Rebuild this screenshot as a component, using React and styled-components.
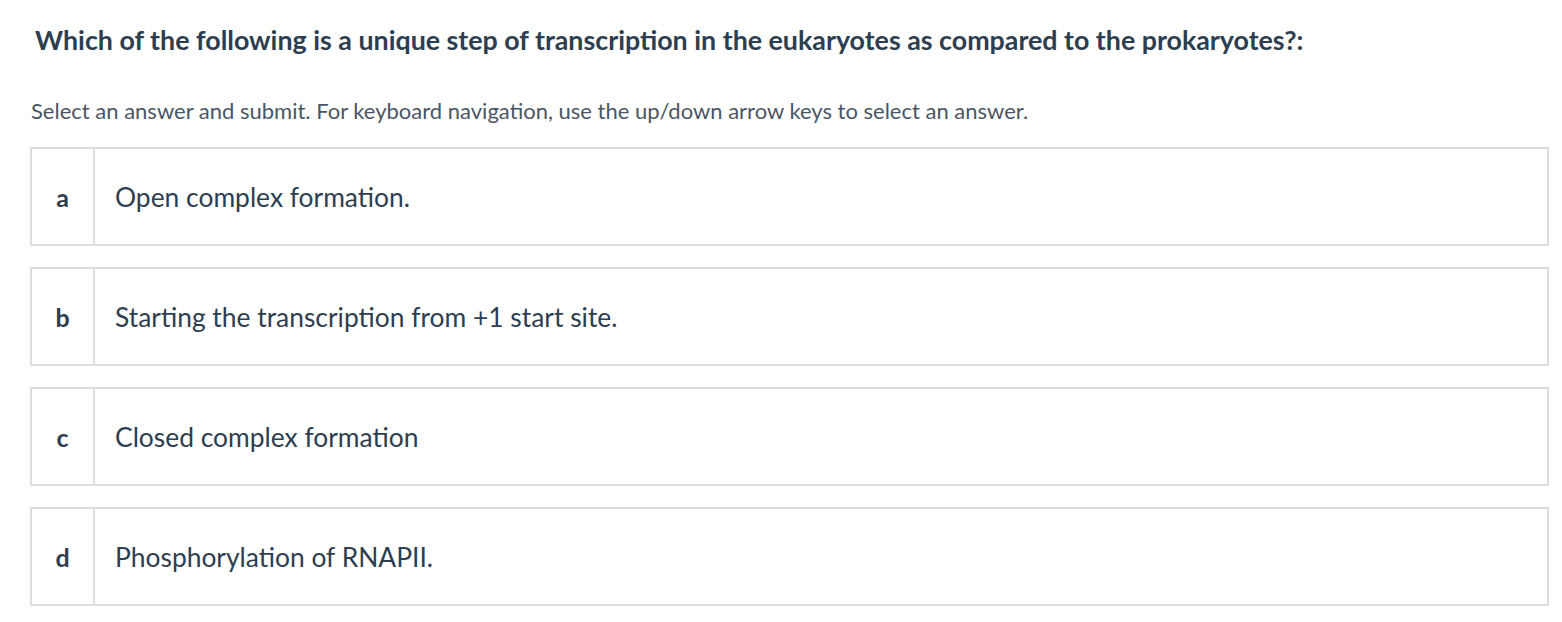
import React from "react";
import styled, { createGlobalStyle } from "styled-components";

const GlobalStyle = createGlobalStyle`
  body {
    margin: 0;
    background: #ffffff;
    font-family: Lato, "Open Sans", sans-serif;
    color: #2d3e50;
  }
`;

const Page = styled.div`
  padding: 22px 13px 0 30px;
`;

const Question = styled.h2`
  margin: 0 0 0 5px;
  font-size: 26.8px;
  line-height: 36px;
  font-weight: 700;
  color: #2d3e50;
`;

const Hint = styled.p`
  margin: 39px 0 22px 1px;
  font-size: 22px;
  line-height: 28px;
  color: #4a5663;
`;

const Options = styled.div`
  display: flex;
  flex-direction: column;
  gap: 21px;
`;

const Option = styled.div`
  display: flex;
  height: 99px;
  border: 2px solid #dadde1;
  box-sizing: border-box;
  background: #fff;
  cursor: pointer;
`;

const Letter = styled.div`
  width: 61px;
  flex-shrink: 0;
  display: flex;
  align-items: center;
  justify-content: center;
  border-right: 2px solid #dadde1;
  font-size: 25px;
  font-weight: 700;
  color: #2d3e50;
`;

const Label = styled.div`
  display: flex;
  align-items: center;
  padding-left: 20px;
  font-size: 26.4px;
  color: #2d3e50;
`;

const answers = [
  ["a", "Open complex formation."],
  ["b", "Starting the transcription from +1 start site."],
  ["c", "Closed complex formation"],
  ["d", "Phosphorylation of RNAPII."],
];

export default function App() {
  return (
    <Page>
      <GlobalStyle />
      <Question>
        Which of the following is a unique step of transcription in the eukaryotes as compared to the prokaryotes?:
      </Question>
      <Hint>
        Select an answer and submit. For keyboard navigation, use the up/down arrow keys to select an answer.
      </Hint>
      <Options>
        {answers.map(([letter, text]) => (
          <Option key={letter}>
            <Letter>{letter}</Letter>
            <Label>{text}</Label>
          </Option>
        ))}
      </Options>
    </Page>
  );
}
